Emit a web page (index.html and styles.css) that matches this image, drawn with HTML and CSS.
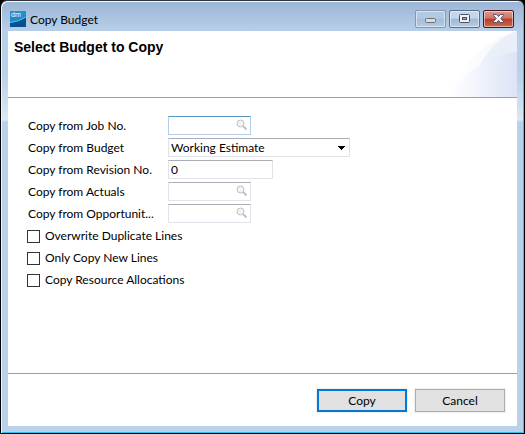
FILE: index.html
```html
<!DOCTYPE html>
<html lang="en">
<head>
<meta charset="utf-8">
<title>Copy Budget</title>
<link rel="stylesheet" href="styles.css">
</head>
<body>
<div class="window">
  <header class="titlebar">
    <svg class="app-icon" viewBox="0 0 16 16" aria-hidden="true">
      <defs><linearGradient id="app" x1="0" y1="0" x2="0" y2="1"><stop offset="0" stop-color="#1995d2"/><stop offset="1" stop-color="#0c86c8"/></linearGradient></defs>
      <rect width="16" height="16" fill="url(#app)"/>
      <path d="M0 12Q9 11 16 6V16H0Z" fill="#0a4f92"/>
      <path d="M0 11.5Q9 10.500 16 6" fill="none" stroke="#5cc0ea" stroke-width="1"/>
      <text class="app-mark" x="1" y="6">dm</text>
    </svg>
    <h1 class="caption">Copy Budget</h1>
    <div class="window-controls">
      <button class="control minimize" type="button" aria-label="Minimize">
        <svg viewBox="0 0 31 18"><rect x="10.5" y="8.5" width="10" height="4" rx="1" fill="#dcdcdc" stroke="#687078"/></svg>
      </button>
      <button class="control" type="button" aria-label="Maximize">
        <svg viewBox="0 0 31 18"><rect x="10.5" y="4.5" width="10" height="8" rx="1" fill="#f2f2f5" stroke="#4d5068"/><rect x="13.5" y="7.5" width="4" height="2" fill="#8fb0d4" stroke="#4d5068"/></svg>
      </button>
      <button class="control close" type="button" aria-label="Close">
        <svg viewBox="0 0 31 18"><path d="M10.5 4.500H13.500L15.500 6.500L17.500 4.500H20.500V5.500L17.800 8.500L20.500 11.500V12.500H17.500L15.500 10.500L13.500 12.500H10.500V11.500L13.200 8.500L10.500 5.500Z" fill="#f4f4f6" stroke="#555568"/></svg>
      </button>
    </div>
  </header>
  <form class="dialog">
    <div class="banner">
      <h2 class="heading">Select Budget to Copy</h2>
      <svg class="swoosh" viewBox="0 0 72 66" aria-hidden="true">
        <defs>
          <linearGradient id="outer"><stop offset="0" stop-color="#fff"/><stop offset=".45" stop-color="#fafcfe"/><stop offset="1" stop-color="#f0f3fb"/></linearGradient>
          <linearGradient id="inner"><stop offset="0" stop-color="#fff"/><stop offset=".4" stop-color="#f3f6fc"/><stop offset="1" stop-color="#dde3f6"/></linearGradient>
        </defs>
        <path d="M0 66Q28 13 72 0V66Z" fill="url(#outer)"/>
        <path d="M34 36Q48 9 72 0V22Q52 23 34 36Z" fill="#e6ebf8" opacity=".7"/>
        <path d="M2 66Q32 25 72 21V66Z" fill="url(#inner)"/>
      </svg>
    </div>
    <div class="fields">
      <div class="row">
        <label for="job">Copy from Job No.</label>
        <span class="lookup active"><input id="job" type="text"><svg class="lens" viewBox="0 0 12 12" aria-hidden="true"><circle cx="4.500" cy="4.500" r="3.500"/><path d="M7 7L10.500 10.500"/></svg></span>
      </div>
      <div class="row">
        <label for="budget">Copy from Budget</label>
        <span class="combo"><select id="budget"><option>Working Estimate</option></select><svg class="arrow" viewBox="0 0 7 4" aria-hidden="true"><path d="M0 0H7V1H6V2H5V3H4V4H3V3H2V2H1V1H0Z"/></svg></span>
      </div>
      <div class="row">
        <label for="revision">Copy from Revision No.</label>
        <input class="revision" id="revision" type="text" value="0">
      </div>
      <div class="row">
        <label for="actuals">Copy from Actuals</label>
        <span class="lookup"><input id="actuals" type="text"><svg class="lens" viewBox="0 0 12 12" aria-hidden="true"><circle cx="4.500" cy="4.500" r="3.500"/><path d="M7 7L10.500 10.500"/></svg></span>
      </div>
      <div class="row">
        <label for="opportunity">Copy from Opportunit...</label>
        <span class="lookup"><input id="opportunity" type="text"><svg class="lens" viewBox="0 0 12 12" aria-hidden="true"><circle cx="4.500" cy="4.500" r="3.500"/><path d="M7 7L10.500 10.500"/></svg></span>
      </div>
      <label class="check"><input type="checkbox">Overwrite Duplicate Lines</label>
      <label class="check"><input type="checkbox">Only Copy New Lines</label>
      <label class="check"><input type="checkbox">Copy Resource Allocations</label>
    </div>
    <footer class="actions">
      <button class="action primary" type="button">Copy</button>
      <button class="action" type="button">Cancel</button>
    </footer>
  </form>
</div>
</body>
</html>
```
FILE: styles.css
```css
* { box-sizing: border-box; }

body {
  margin: 0;
  background: #000;
  color: #000;
  font: 12px/16px Lato, "Open Sans", sans-serif;
}

input, select, button { font: inherit; color: inherit; }

.window {
  display: flex;
  flex-direction: column;
  min-height: 100vh;
  padding: 0 7px 7px;
  border: 1px solid #000;
  border-top-color: #30343c;
  border-radius: 7px 7px 0 0;
  background: linear-gradient(#9ab5d4 0, #b8cfe8 30px, #b9d1ea 75px, #dbe7f5 119px, #b9d1ea 121px);
  box-shadow: inset 1px 1px #f4f8fc, inset -1px -1px #30c4e8;
}

.titlebar {
  display: flex;
  align-items: center;
  height: 30px;
  padding: 0 3px 0 2px;
}

.app-icon { width: 16px; height: 16px; margin-top: 6px; }
.app-mark { font: 7px "Liberation Sans", sans-serif; fill: #fff; }

.caption {
  flex: 1;
  margin: 8px 0 0 4px;
  font-size: 12px;
  font-weight: 400;
}

.window-controls { display: flex; gap: 3px; }

.control {
  width: 31px;
  height: 18px;
  margin-top: 6px;
  padding: 0;
  border: 1px solid #596f8c;
  border-radius: 2px;
  background: linear-gradient(#c4d6ea 0 45%, #9fb9d5 50%, #b5cce4);
  box-shadow: inset 0 0 0 1px #ffffff80;
}
.control svg { display: block; width: 31px; height: 18px; margin: -1px; }
.minimize { border-color: #8299b5; background: linear-gradient(#b3c9e1 0 45%, #a4bdd9 50%, #b3cbe4); }
.close {
  border-color: #4c1422;
  background: linear-gradient(#dc9a8e 0, #cf7465 45%, #b93b27 50%, #cf6a50);
}

.dialog {
  display: flex;
  flex: 1;
  flex-direction: column;
  background: #fff;
}

.banner {
  display: flex;
  justify-content: space-between;
  height: 67px;
  border-bottom: 1px solid #a0a0a0;
}
.heading {
  margin: 8px 0 0 6px;
  font: bold 14px/17px "Liberation Sans", Arial, sans-serif;
}
.swoosh { width: 72px; height: 66px; }

.fields { flex: 1; padding: 18px 20px; }

.row { display: flex; gap: 8px; height: 22px; }
.row label { width: 132px; line-height: 20px; white-space: nowrap; }
.row:has(+ .check) { height: 21px; }

.lookup, .combo, .revision {
  display: flex;
  height: 19px;
  border: 1px solid #e2e3ea;
  border-top-color: #abadb3;
  background: #fff;
}
.lookup { width: 83px; padding-right: 2px; }
.lookup.active { border-color: #b5cfe7; border-top-color: #5794bf; }
.lookup input { flex: 1; min-width: 0; padding: 0 2px; border: 0; outline: 0; background: none; }
.lens { width: 12px; height: 12px; margin-top: 2px; fill: #f4f4f4; stroke: #c0c0c0; }
.lens path { stroke-width: 2; }

.combo { align-items: center; width: 182px; padding-right: 4px; }
.combo select { flex: 1; min-width: 0; height: 17px; padding: 0 2px; border: 0; background: none; appearance: none; }
.arrow { width: 7px; height: 4px; shape-rendering: crispEdges; }

.revision { width: 105px; padding: 0 2px; }

.check { display: flex; align-items: center; gap: 5px; width: fit-content; height: 22px; margin-left: -1px; }
.check input { appearance: none; width: 13px; height: 13px; margin: 0; border: 1px solid #333; background: #fff; }
.check input:checked { background: #333; }

.actions {
  display: flex;
  justify-content: flex-end;
  gap: 8px;
  padding: 15px 12px 14px;
  border-top: 1px solid #a0a0a0;
}
.action { width: 90px; height: 23px; padding: 0; border: 1px solid #adadad; background: #e1e1e1; box-shadow: 0 0 0 1px #f0f0f0; }
.primary { border: 2px solid #0078d7; }
```
